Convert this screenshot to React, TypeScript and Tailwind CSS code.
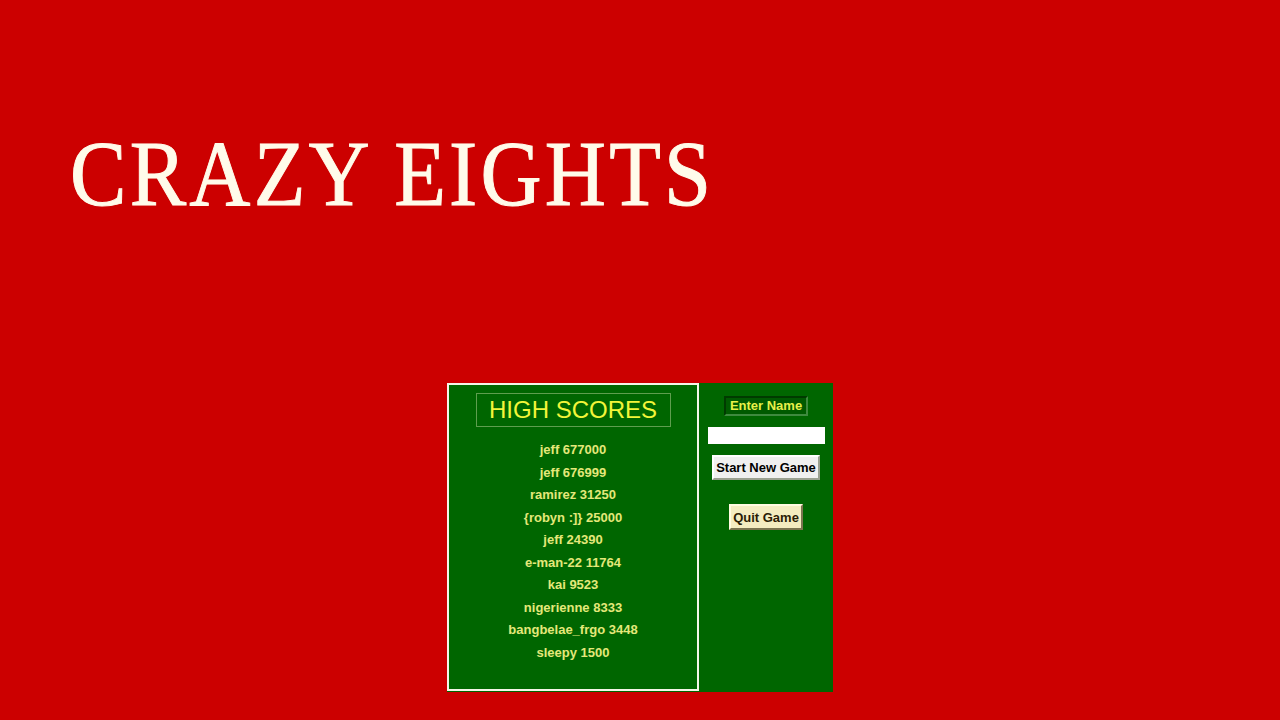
const scores = [
  ["jeff", 677000],
  ["jeff", 676999],
  ["ramirez", 31250],
  ["{robyn :]}", 25000],
  ["jeff", 24390],
  ["e-man-22", 11764],
  ["kai", 9523],
  ["nigerienne", 8333],
  ["bangbelae_frgo", 3448],
  ["sleepy", 1500],
] as const;

const sans = "font-['Liberation_Sans',Arial,sans-serif]";

export default function App() {
  return (
    <div className="w-[1280px] h-[720px] bg-[#cc0000] overflow-hidden flex flex-col">
      <h1 className="ml-[70px] mt-[126px] h-[94px] origin-left scale-x-[0.9] font-['Liberation_Serif','Times_New_Roman',serif] text-[94px] leading-none tracking-[3.6px] whitespace-nowrap text-[#fffbea] [-webkit-text-stroke:1px_#fffbea]">
        CRAZY EIGHTS
      </h1>

      <div className={`ml-[447px] mt-[163px] flex w-[386px] h-[309px] bg-[#006600] ${sans}`}>
        <div className="w-[252px] h-[308px] border-2 border-[#f4f6e8] flex flex-col items-center">
          <div className="mt-[8px] w-[195px] h-[34px] border border-[#5e9e4e] flex items-center justify-center text-[24px] leading-none text-[#f2f53a]">
            HIGH SCORES
          </div>
          <ul className="mt-[12px] flex flex-col items-center">
            {scores.map(([name, pts], i) => (
              <li
                key={i}
                className="h-[22.5px] leading-[22.5px] text-[13px] font-bold text-[#e4e87a]"
              >
                {name} {pts}
              </li>
            ))}
          </ul>
        </div>

        <div className="flex-1 flex flex-col items-center">
          <div className="mt-[13px] w-[84px] h-[20px] flex items-center justify-center border-2 border-t-[#003a00] border-l-[#003a00] border-b-[#3f8a3f] border-r-[#3f8a3f] bg-[#005a00] text-[13px] font-bold text-[#e8f04a]">
            Enter Name
          </div>
          <input
            type="text"
            className="mt-[11px] w-[117px] h-[17px] bg-white outline-none border-0"
          />
          <button className="mt-[11px] w-[108px] h-[25px] bg-[#f0f0f0] border-2 border-t-white border-l-white border-b-[#9aa090] border-r-[#9aa090] text-[13px] font-bold text-black leading-none">
            Start New Game
          </button>
          <button className="mt-[24px] w-[74px] h-[26px] bg-[#f4ecc0] border-2 border-t-[#fffbe0] border-l-[#fffbe0] border-b-[#7a7450] border-r-[#7a7450] text-[13px] font-bold text-[#2a1c05] leading-none">
            Quit Game
          </button>
        </div>
      </div>
    </div>
  );
}
